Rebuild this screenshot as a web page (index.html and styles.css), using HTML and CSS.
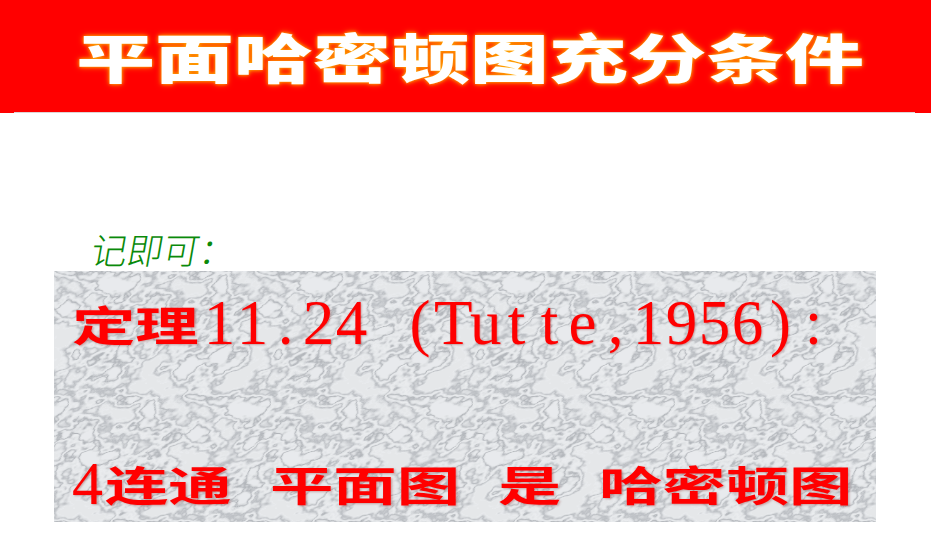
FILE: index.html
```html
<!DOCTYPE html>
<html lang="zh">
<head>
<meta charset="utf-8">
<title>平面哈密顿图充分条件</title>
<link rel="stylesheet" href="styles.css">
</head>
<body>
<header class="banner"><h1 class="title">平面哈密顿图充分条件</h1></header>
<div class="rule"><div class="rule-line"></div></div>
<main class="slide">
  <p class="note">记即可：</p>
  <section class="card">
    <svg class="marble" width="822" height="251" aria-hidden="true">
      <defs>
        <filter id="stone" x="0" y="0" width="100%" height="100%" color-interpolation-filters="sRGB">
          <feTurbulence type="fractalNoise" baseFrequency="0.0297 0.04" numOctaves="4" seed="7" stitchTiles="stitch" result="n"/>
          <feColorMatrix in="n" type="matrix" values="0 0 0 0 0.45  0 0 0 0 0.47  0 0 0 0 0.5  2.4 2.4 0 0 -1.9"/>
          <feComponentTransfer result="veins">
            <feFuncA type="table" tableValues="0.04 0.08 0.2 0.42 0.12 0.03 0.1 0.5 0.14 0.05"/>
          </feComponentTransfer>
          <feFlood flood-color="#eef0f2" result="base"/>
          <feComposite in="veins" in2="base" operator="over"/>
        </filter>
        <pattern id="tile" width="202" height="125" patternUnits="userSpaceOnUse" patternTransform="skewX(-30)">
          <rect width="202" height="125" filter="url(#stone)"/>
        </pattern>
      </defs>
      <rect width="822" height="251" fill="url(#tile)"/>
    </svg>
    <h2 class="theorem">
      <b class="cjk w2">定理</b>
      <span class="num"><i>1</i><i>1</i><i>.</i><i>2</i><i>4</i><i class="space"> </i><i class="paren">(</i><i class="cap">T</i><i class="low">u</i><i>t</i><i>t</i><i>e</i><i>,</i><i>1</i><i>9</i><i>5</i><i>6</i><i>)</i><i>:</i></span>
    </h2>
    <p class="claim">
      <span class="lead"><span class="digit">4</span><b class="cjk w2">连通</b></span>
      <b class="cjk w3">平面图</b>
      <b class="cjk w1">是</b>
      <b class="cjk w4">哈密顿图</b>
    </p>
  </section>
</main>
</body>
</html>
```
FILE: styles.css
```css
* { box-sizing: border-box; }
html, body { margin: 0; padding: 0; background: #fff; overflow: hidden; }
body { width: 931px; height: 542px; font-family: "Noto Sans CJK SC", sans-serif; }

.banner {
  height: 112px;
  background: #ff0000;
  display: flex;
  align-items: center;
  justify-content: center;
  padding-left: 9px;
}
.title {
  margin: 0;
  color: #fff;
  font-size: 59px;
  line-height: 70px;
  font-weight: 900;
  white-space: nowrap;
  transform: scale(1.335, 0.9);
  text-shadow: 0 0 3px #ffb000, 0 0 6px #ff9000;
}
.rule { height: 1px; padding: 0 16px 0 14px; background: #ff0000; }
.rule-line { height: 1px; background: #ded4d4; }

.slide { padding: 112px 0 0 54px; }
.note {
  margin: 0 0 0 38px;
  height: 46px;
  width: 150px;
  font-size: 36px;
  line-height: 46px;
  font-weight: 300;
  color: #0a8a0a;
  white-space: nowrap;
  transform: skewX(-10deg);
}
.card {
  position: relative;
  width: 822px;
  height: 251px;
  overflow: hidden;
  padding-left: 18px;
  color: #ff0000;
}
.marble { position: absolute; left: 0; top: 0; }
.theorem, .claim { position: relative; margin: 0; white-space: nowrap; text-shadow: 1px 1px 2px rgba(120, 0, 0, .3); }
.theorem { display: flex; align-items: center; height: 104px; font-weight: 400; }

.cjk { display: block; font-weight: 700; font-size: 44px; line-height: 56px; transform-origin: left center; transform: scale(1.44, .94); }
.w1 { width: 63px; }
.w2 { width: 127px; }
.w3 { width: 190px; }
.w4 { width: 255px; }

.theorem .cjk { width: 131px; }
.num { display: flex; font-family: "Liberation Serif", serif; font-size: 63px; line-height: 70px; }
.num i { display: block; width: 33px; font-style: normal; text-align: center; white-space: pre; }
.num .space { width: 38px; }
.num .paren { width: 28px; }
.num .cap { width: 36px; }
.num .low { width: 30px; }

.claim { display: flex; align-items: center; gap: 38px; height: 56px; margin-top: 80px; }
.lead { display: flex; align-items: center; }
.digit { font-family: "Liberation Serif", serif; font-size: 62px; line-height: 56px; width: 33px; }
```
